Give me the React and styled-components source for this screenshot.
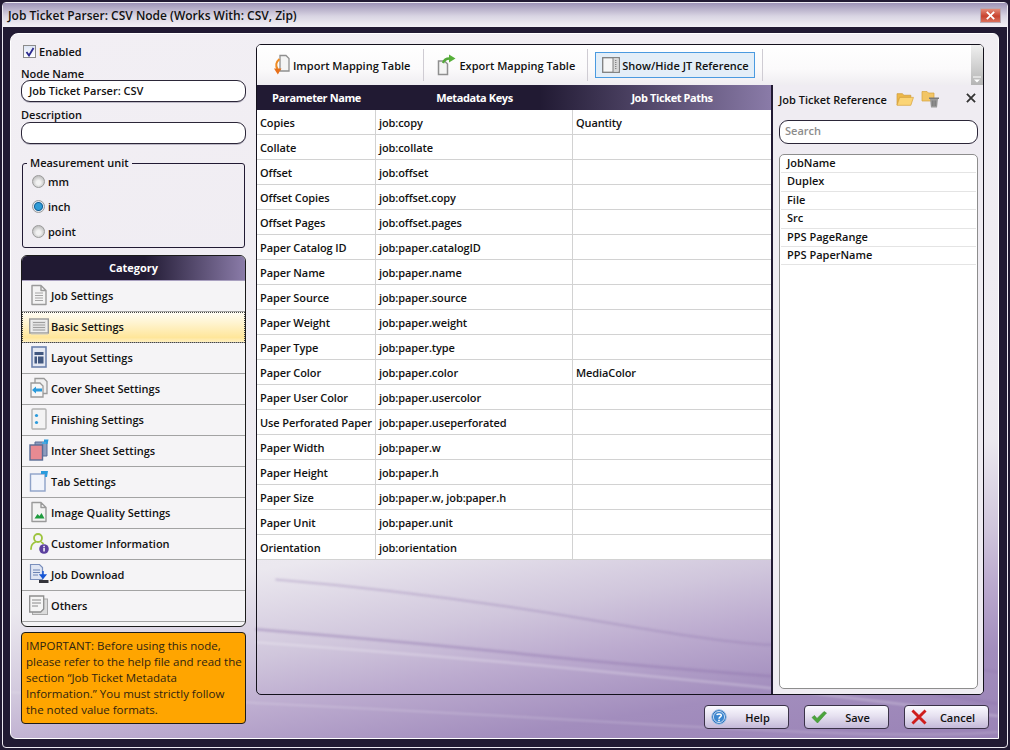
import React from "react";
import styled, { createGlobalStyle } from "styled-components";

const dark = "#211a33";

const Global = createGlobalStyle`
  html, body { margin: 0; padding: 0; background: ${dark}; }
  * { box-sizing: border-box; }
  body {
    font-family: "Open Sans", "Liberation Sans", sans-serif;
    font-size: 11px;
    font-weight: 600;
    color: #111;
  }
`;

const Shell = styled.div`
  width: 1010px;
  height: 750px;
  padding: 2px;
  background: ${dark};
  overflow: hidden;
`;
const Win = styled.div`
  height: 100%;
  display: flex;
  flex-direction: column;
  border: 1px solid #ece9f1;
  border-radius: 4px;
`;
const TitleBar = styled.div`
  height: 24px;
  flex: none;
  display: flex;
  align-items: center;
  justify-content: space-between;
  padding: 0 6px 0 5px;
  background: linear-gradient(#9d93b6, #d9d5e3 55%, #f3f1f6);
  font-size: 12px;
`;
const CloseBtn = styled.div`
  width: 21px;
  height: 15px;
  display: flex;
  align-items: center;
  justify-content: center;
  background: linear-gradient(#e58a77, #c8432f 55%, #d8705c);
  border: 1px solid #b9a7b0;
`;
const Frame = styled.div`
  flex: 1;
  min-height: 0;
  padding: 6px 8px 8px 7px;
  display: flex;
`;
const Panel = styled.div`
  position: relative;
  flex: 1;
  display: flex;
  gap: 10px;
  padding: 10px 9px 9px 10px;
  border: 1px solid #fff;
  border-radius: 8px 6px 0 6px;
  overflow: hidden;
  background: linear-gradient(170deg, #f2eff4 0%, #eeebf1 60%, #ebe8ef 66%, #d0c6dc 76%, #bcabcf 82%, #a28dbd 90%, #9a83b6 100%);
`;
const Streaks = styled.svg`
  position: absolute;
  inset: 0;
  width: 100%;
  height: 100%;
  filter: blur(1.2px);
`;
const Left = styled.div`
  position: relative;
  width: 225px;
  flex: none;
  display: flex;
  flex-direction: column;
  & > * { flex: none; }
`;
const Right = styled.div`
  position: relative;
  width: 733px;
  flex: none;
  display: flex;
  flex-direction: column;
`;
const EnabledRow = styled.label`
  display: flex;
  align-items: center;
  gap: 3px;
  height: 13px;
  margin: 1px 0 9px 2px;
`;
const Check = styled.span`
  width: 13px;
  height: 13px;
  display: flex;
  align-items: center;
  justify-content: center;
  background: linear-gradient(#dfe6f5, #fff);
  border: 1px solid #8b8b8b;
`;
const FieldLabel = styled.div`
  height: ${(p) => p.$height || 14}px;
  line-height: 14px;
`;
const TextBox = styled.div`
  height: 22px;
  line-height: 20px;
  padding: 0 7px;
  margin-bottom: ${(p) => p.$after || 0}px;
  background: #fff;
  border: 1px solid #2b2638;
  border-radius: 9px;
  box-shadow: 0 1px 0 #bdb9c6;
`;
const UnitBox = styled.fieldset`
  height: 92px;
  margin: 0 1px;
  padding: 0 0 0 9px;
  border: 1px solid ${dark};
  border-radius: 3px;
  display: flex;
  flex-direction: column;
`;
const UnitLegend = styled.legend`
  padding: 0 3px;
  margin-left: -5px;
  margin-bottom: -1px;
  line-height: 14px;
`;
const RadioRow = styled.div`
  height: 25px;
  display: flex;
  align-items: center;
  gap: 3px;
`;
const RadioDot = styled.span`
  width: 13px;
  height: 13px;
  border-radius: 50%;
  border: 1px solid #9a9a9a;
  background: ${(p) =>
    p.$on
      ? "radial-gradient(circle, #2f9bd6 0 3px, #0f5f97 4px, #dfe6ee 5px)"
      : "radial-gradient(circle at 50% 60%, #f2f2f2 0 2px, #c4c4c4 6px)"};
`;
const Category = styled.div`
  height: 372px;
  margin-top: 7px;
  background: #f5f4f6;
  border: 1px solid #1b1b1b;
  border-radius: 6px;
  overflow: hidden;
`;
const GradientHead = styled.div`
  background: linear-gradient(90deg, ${dark} 0%, ${dark} 55%, #8a7ba8 100%);
  color: #fff;
  font-weight: 700;
  text-align: center;
`;
const CategoryHead = styled(GradientHead)`
  height: 25px;
  line-height: 24px;
  border-bottom: 1px solid #a9a0c0;
`;
const CategoryRow = styled.div`
  height: 31px;
  display: flex;
  align-items: center;
  gap: 2px;
  padding: 0 0 2px 7px;
  border-bottom: 1px solid #a3a3a3;
  ${(p) =>
    p.$active &&
    `background: linear-gradient(#fffdf5, #fff3cc 40%, #ffe69a 85%, #fff0c2);
     outline: 1px dotted #444;
     outline-offset: -1px;`}
`;
const Notice = styled.div`
  height: 92px;
  margin-top: 5px;
  padding: 5px 4px 0;
  background: #ffa500;
  border: 1px solid #1b1b1b;
  border-radius: 4px;
  font-size: 11.5px;
  font-weight: 400;
  line-height: 16px;
  color: #2f2410;
  white-space: nowrap;
`;
const Main = styled.div`
  width: 728px;
  height: 651px;
  flex: none;
  display: flex;
  flex-direction: column;
  border: 1px solid #14111c;
  border-radius: 5px;
  overflow: hidden;
`;
const Toolbar = styled.div`
  height: 40px;
  flex: none;
  display: flex;
  align-items: center;
  padding-left: 17px;
  background: linear-gradient(#fff, #fbfafb 60%, #efedf1);
`;
const ToolItem = styled.div`
  display: flex;
  align-items: center;
  gap: 3px;
  margin-right: ${(p) => p.$after ?? 13}px;
`;
const ToolActive = styled(ToolItem)`
  height: 26px;
  width: 160px;
  padding-left: 6px;
  gap: 2px;
  background: #e3eef8;
  border: 1px solid #4a9ae0;
`;
const ToolSep = styled.div`
  width: 1px;
  height: 32px;
  background: #cfccd3;
  margin-right: ${(p) => p.$after ?? 13}px;
`;
const Grip = styled.div`
  margin-left: auto;
  width: 12px;
  height: 100%;
  display: flex;
  align-items: flex-end;
  justify-content: center;
  padding-bottom: 2px;
  background: linear-gradient(#f0f0f0, #b5b5b5);
`;
const Content = styled.div`
  flex: 1;
  min-height: 0;
  display: flex;
`;
const TableArea = styled.div`
  width: 514px;
  flex: none;
`;
const TableHead = styled(GradientHead)`
  height: 25px;
  display: grid;
  grid-template-columns: 119px 197px 198px;
  line-height: 25px;
  letter-spacing: -0.4px;
`;
const TableRow = styled.div`
  height: 25px;
  display: grid;
  grid-template-columns: 119px 197px 198px;
  background: #fff;
  border-bottom: 1px solid #d2d2d2;
`;
const Cell = styled.div`
  padding-left: 3px;
  line-height: 25px;
  letter-spacing: -0.1px;
  white-space: nowrap;
  border-right: 1px solid #d2d2d2;
  &:last-child { border-right: none; }
`;
const RefPane = styled.div`
  flex: 1;
  display: flex;
  flex-direction: column;
  padding: 0 5px 5px 6px;
  background: #efecf2;
  border-left: 2px solid ${dark};
`;
const RefHead = styled.div`
  height: 28px;
  flex: none;
  display: flex;
  align-items: center;
`;
const RefTitle = styled.span`
  margin-right: 9px;
`;
const RefGap = styled.span`
  width: 7px;
`;
const RefClose = styled.span`
  margin-left: auto;
  display: flex;
  margin-right: 2px;
  margin-top: -3px;
`;
const SearchBox = styled.div`
  height: 24px;
  flex: none;
  margin-top: 7px;
  padding: 0 5px;
  line-height: 20px;
  color: #8c8c8c;
  background: #fff;
  border: 1px solid #2b2638;
  border-radius: 9px;
`;
const RefList = styled.div`
  flex: 1;
  margin-top: 10px;
  padding: 0 1px;
  background: #fff;
  border: 1px solid #8d8d8d;
  border-radius: 5px;
`;
const RefRow = styled.div`
  height: 18.4px;
  line-height: 16px;
  padding-left: 6px;
  border-bottom: 1px solid #e4e4e4;
`;
const Footer = styled.div`
  display: flex;
  justify-content: flex-end;
  gap: 15px;
  margin-top: 10px;
`;
const FooterBtn = styled.div`
  width: 85px;
  height: 24px;
  display: flex;
  align-items: center;
  padding-left: 6px;
  background: linear-gradient(#fbfaff, #e6e1f0 45%, #c4b9d9);
  border: 1px solid #3a3248;
  border-radius: 4px;
`;
const BtnLabel = styled.span`
  flex: 1;
  text-align: center;
`;

const DocBase = () => (
  <path d="M3 1.500h9l5 5v14H3z M12 1.500v5h5" fill="#f3f3f3" stroke="#9a9a9a" strokeWidth="1.400" strokeLinejoin="round" />
);

const icons = {
  job: (
    <>
      <DocBase />
      <path d="M6 9h8M6 11.500h8M6 14h8M6 16.500h8" stroke="#a5a5a5" />
    </>
  ),
  basic: (
    <>
      <rect x="0.700" y="4" width="18.600" height="14" fill="#eeeeee" stroke="#9a9a9a" strokeWidth="1.400" />
      <path d="M2 19h17" stroke="#c9c9c9" />
      <rect x="3" y="6" width="14" height="10" fill="#e2e2e2" />
      <path d="M4 7.500h12M4 10h12M4 12.500h12M4 15h12" stroke="#9f9f9f" />
    </>
  ),
  layout: (
    <>
      <rect x="3" y="1" width="14" height="20" fill="#e4e8f2" stroke="#6d82ad" strokeWidth="1.600" />
      <path d="M5.500 6h9v3h-9z M9 10.500h5.500v7H9z M5.500 10.500h2.500v7h-2.500z" fill="#41577f" />
    </>
  ),
  cover: (
    <>
      <path d="M6 1.500h9l3 3v12H6z" fill="#f0f0f0" stroke="#9a9a9a" strokeWidth="1.300" />
      <path d="M2 6h9l3 3v11H2z" fill="#f7f7f7" stroke="#9a9a9a" strokeWidth="1.300" />
      <path d="M3 13l4-3.500v2h6v3H7v2z" fill="#2b9bdc" />
    </>
  ),
  finishing: (
    <>
      <rect x="3" y="1" width="14" height="20" rx="1" fill="#f3f3f3" stroke="#b3b3b3" strokeWidth="1.400" />
      <circle cx="7.500" cy="7.500" r="1.600" fill="#2b9bdc" />
      <circle cx="7.500" cy="14.500" r="1.600" fill="#2b9bdc" />
    </>
  ),
  inter: (
    <>
      <path d="M6 3h12v14H6z" fill="#8d9cbd" stroke="#5a6d96" />
      <path d="M15 0.500h4.500l-1 4.500H15z" fill="#2b9bdc" />
      <rect x="1" y="6" width="12.500" height="15" fill="#e78a92" stroke="#5a6d96" strokeWidth="1.400" />
      <path d="M13 3h4v2h-4z" fill="#4aa7de" />
    </>
  ),
  tab: (
    <>
      <rect x="1.500" y="4" width="14.500" height="17" fill="#f1f4fb" stroke="#8ea2c8" strokeWidth="1.400" />
      <path d="M12 1h7l-1 6h-2V4h-4z" fill="#2b9bdc" />
    </>
  ),
  image: (
    <>
      <DocBase />
      <path d="M5.500 17.500l3-4.500 2 2 2-3 3 5.500z" fill="#1f9c3f" />
    </>
  ),
  customer: (
    <>
      <circle cx="9" cy="6" r="4" fill="none" stroke="#9ec43f" strokeWidth="1.800" />
      <path d="M2 17c0-4 2-6 4.500-7" fill="none" stroke="#9ec43f" strokeWidth="1.800" strokeLinecap="round" />
      <path d="M12 10c1 .5 2 1 2.500 2" fill="none" stroke="#9ec43f" strokeWidth="1.800" />
      <circle cx="15" cy="17" r="4.800" fill="#5b3f9e" />
      <rect x="14.300" y="15.800" width="1.500" height="3.700" fill="#fff" />
      <rect x="14.300" y="13.800" width="1.500" height="1.300" fill="#fff" />
    </>
  ),
  download: (
    <>
      <path d="M1.500 1.500h9l3 3v12h-12z" fill="#dfe5f3" stroke="#7a8fbc" strokeWidth="1.200" />
      <path d="M4 7h7M4 9.500h7M4 12h5" stroke="#6c83b3" />
      <path d="M14 8v6M11.500 12l2.500 3 2.500-3z" stroke="#1556d6" strokeWidth="1.500" fill="#1556d6" />
      <rect x="10" y="17" width="9.500" height="3" fill="#33333a" />
    </>
  ),
  others: (
    <>
      <rect x="3.500" y="5" width="15" height="15.500" fill="#dcdcdc" stroke="#a8a8a8" />
      <path d="M0.700 2h14v13l-3 3h-11z" fill="#f5f5f5" stroke="#8e8e8e" strokeWidth="1.300" />
      <path d="M3 6h9M3 9h9M3 12h6" stroke="#8a8a8a" />
    </>
  ),
};

const CategoryIcon = ({ name }) => (
  <svg width="20" height="22" viewBox="0 0 20 22">
    {icons[name]}
  </svg>
);

const ImportIcon = () => (
  <svg width="16" height="22" viewBox="0 0 16 22">
    <path d="M6 1.500h6l3 3V17H6z" fill="#f4f4f4" stroke="#8f8f8f" strokeWidth="1.300" />
    <path d="M5.500 5C2 8 1.500 12 3.500 15" fill="none" stroke="#ee8b24" strokeWidth="2.200" />
    <path d="M0 14.500h7.500L3.800 20.500z" fill="#e8701a" />
  </svg>
);
const ExportIcon = () => (
  <svg width="19" height="22" viewBox="0 0 19 22">
    <path d="M1.500 7h6l3 3v10.500h-9z" fill="#f4f4f4" stroke="#8f8f8f" strokeWidth="1.500" />
    <path d="M6 9C7 6 9 4.500 12.500 4.500" fill="none" stroke="#55a83b" strokeWidth="2.400" />
    <path d="M12 0.500L18.500 4.500 12 8.500z" fill="#57b03a" />
  </svg>
);
const ToggleIcon = () => (
  <svg width="18" height="18" viewBox="0 0 18 18">
    <rect x="0.700" y="1.700" width="16.600" height="14.600" fill="#f6f6f6" stroke="#7e7e7e" strokeWidth="1.300" />
    <rect x="11" y="2.500" width="5.500" height="13" fill="#d8d8d8" />
    <path d="M11 2v14" stroke="#7e7e7e" />
    <path d="M13.800 4v10" stroke="#666" strokeDasharray="1 1" />
  </svg>
);
const FolderIcon = () => (
  <svg width="18" height="15" viewBox="0 0 17 14">
    <path d="M1 3V1.500h5L7.500 3H14v2H3.500L1 12z" fill="#eeb94a" stroke="#cf9a35" strokeWidth=".7" />
    <path d="M3.500 5H16.500L14 12.500H1z" fill="#fbd475" stroke="#d9a540" strokeWidth=".7" />
  </svg>
);
const FolderTrashIcon = () => (
  <svg width="19" height="19" viewBox="0 0 19 19">
    <path d="M1 1.500h5L7.500 3H13v8H1z" fill="#f2c566" stroke="#d7a33d" strokeWidth=".7" />
    <path d="M8 7.500h10v1.500H8z" fill="#7a7a7a" />
    <path d="M9 9h8l-1 8.500h-6z" fill="#9a9a9a" />
    <path d="M11.300 10.500v5.500M13 10.500v5.500M14.700 10.500v5.500" stroke="#6d6d6d" strokeWidth=".7" />
  </svg>
);
const CrossIcon = ({ size = 11, color = "#333", width = 2 }) => (
  <svg width={size} height={size} viewBox="0 0 11 11">
    <path d="M1 1l9 9M10 1l-9 9" stroke={color} strokeWidth={width} />
  </svg>
);
const HelpIcon = () => (
  <svg width="16" height="16" viewBox="0 0 16 16">
    <circle cx="8" cy="8" r="7.300" fill="#2a6fbd" stroke="#9fc0e4" strokeWidth="1" />
    <circle cx="8" cy="8" r="5.600" fill="#3c86d0" stroke="#e8f1fa" strokeWidth=".8" />
    <path d="M5.800 6.200C6 4.600 10.200 4.400 10.300 6.500 10.300 8 8 8 8 9.800" fill="none" stroke="#fff" strokeWidth="1.500" />
    <rect x="7.200" y="10.700" width="1.600" height="1.600" fill="#fff" />
  </svg>
);
const SaveIcon = () => (
  <svg width="16" height="14" viewBox="0 0 16 14">
    <path d="M1 7.500L3.500 5.500 6 8.500 13 1.500 15.500 3 6.500 13z" fill="#4ba53c" stroke="#3c8a30" strokeWidth=".6" />
  </svg>
);
const CancelIcon = () => (
  <svg width="16" height="16" viewBox="0 0 11 11">
    <path d="M1 1l9 9M10 1l-9 9" stroke="#cf1d1d" strokeWidth="2" />
  </svg>
);
const Grabber = () => (
  <svg width="8" height="7" viewBox="0 0 8 7">
    <path d="M0 1h8" stroke="#fff" />
    <path d="M1 3.500h6L4 6.500z" fill="#fff" />
  </svg>
);
const CheckMark = () => (
  <svg width="10" height="10" viewBox="0 0 10 10">
    <path d="M1.500 5L4 8.500 8.500 1" fill="none" stroke="#2c2a8f" strokeWidth="1.800" />
  </svg>
);

const categories = [
  ["job", "Job Settings"],
  ["basic", "Basic Settings"],
  ["layout", "Layout Settings"],
  ["cover", "Cover Sheet Settings"],
  ["finishing", "Finishing Settings"],
  ["inter", "Inter Sheet Settings"],
  ["tab", "Tab Settings"],
  ["image", "Image Quality Settings"],
  ["customer", "Customer Information"],
  ["download", "Job Download"],
  ["others", "Others"],
];

const rows = [
  ["Copies", "job:copy", "Quantity"],
  ["Collate", "job:collate", ""],
  ["Offset", "job:offset", ""],
  ["Offset Copies", "job:offset.copy", ""],
  ["Offset Pages", "job:offset.pages", ""],
  ["Paper Catalog ID", "job:paper.catalogID", ""],
  ["Paper Name", "job:paper.name", ""],
  ["Paper Source", "job:paper.source", ""],
  ["Paper Weight", "job:paper.weight", ""],
  ["Paper Type", "job:paper.type", ""],
  ["Paper Color", "job:paper.color", "MediaColor"],
  ["Paper User Color", "job:paper.usercolor", ""],
  ["Use Perforated Paper", "job:paper.useperforated", ""],
  ["Paper Width", "job:paper.w", ""],
  ["Paper Height", "job:paper.h", ""],
  ["Paper Size", "job:paper.w, job:paper.h", ""],
  ["Paper Unit", "job:paper.unit", ""],
  ["Orientation", "job:orientation", ""],
];

const refItems = ["JobName", "Duplex", "File", "Src", "PPS PageRange", "PPS PaperName"];

export default function App() {
  return (
    <Shell>
      <Global />
      <Win>
        <TitleBar>
          <span>Job Ticket Parser: CSV Node (Works With: CSV, Zip)</span>
          <CloseBtn>
            <CrossIcon size={9} color="#fff" width={2.2} />
          </CloseBtn>
        </TitleBar>
        <Frame>
          <Panel>
            <Streaks viewBox="0 0 989 706" preserveAspectRatio="none">
              <g fill="none" stroke="#8d74ad">
                <path d="M265 547Q420 560 583 588T770 612T989 640" strokeWidth="2" opacity=".35" />
                <path d="M245 597Q400 610 515 622T762 644T989 672" strokeWidth="2.500" opacity=".45" />
                <path d="M245 610Q450 625 600 640T762 656T989 684" stroke="#fff" strokeWidth="2.500" opacity=".25" />
                <path d="M0 660Q300 672 600 690T989 700" stroke="#fff" strokeWidth="2" opacity=".18" />
              </g>
            </Streaks>
            <Left>
              <EnabledRow>
                <Check>
                  <CheckMark />
                </Check>
                Enabled
              </EnabledRow>
              <FieldLabel $height={13}>Node Name</FieldLabel>
              <TextBox $after={6}>Job Ticket Parser: CSV</TextBox>
              <FieldLabel>Description</FieldLabel>
              <TextBox $after={12} />
              <UnitBox>
                <UnitLegend>Measurement unit</UnitLegend>
                <RadioRow>
                  <RadioDot />
                  mm
                </RadioRow>
                <RadioRow>
                  <RadioDot $on />
                  inch
                </RadioRow>
                <RadioRow>
                  <RadioDot />
                  point
                </RadioRow>
              </UnitBox>
              <Category>
                <CategoryHead>Category</CategoryHead>
                {categories.map(([icon, label]) => (
                  <CategoryRow key={icon} $active={icon === "basic"}>
                    <CategoryIcon name={icon} />
                    {label}
                  </CategoryRow>
                ))}
              </Category>
              <Notice>
                IMPORTANT: Before using this node,
                <br />
                please refer to the help file and read the
                <br />
                section “Job Ticket Metadata
                <br />
                Information.” You must strictly follow
                <br />
                the noted value formats.
              </Notice>
            </Left>
            <Right>
              <Main>
                <Toolbar>
                  <ToolItem>
                    <ImportIcon />
                    Import Mapping Table
                  </ToolItem>
                  <ToolSep />
                  <ToolItem $after={12}>
                    <ExportIcon />
                    Export Mapping Table
                  </ToolItem>
                  <ToolSep $after={7} />
                  <ToolActive $after={7}>
                    <ToggleIcon />
                    Show/Hide JT Reference
                  </ToolActive>
                  <ToolSep />
                  <Grip>
                    <Grabber />
                  </Grip>
                </Toolbar>
                <Content>
                  <TableArea>
                    <TableHead>
                      <span>Parameter Name</span>
                      <span>Metadata Keys</span>
                      <span>Job Ticket Paths</span>
                    </TableHead>
                    {rows.map(([name, key, path]) => (
                      <TableRow key={name}>
                        <Cell>{name}</Cell>
                        <Cell>{key}</Cell>
                        <Cell>{path}</Cell>
                      </TableRow>
                    ))}
                  </TableArea>
                  <RefPane>
                    <RefHead>
                      <RefTitle>Job Ticket Reference</RefTitle>
                      <FolderIcon />
                      <RefGap />
                      <FolderTrashIcon />
                      <RefClose>
                        <CrossIcon size={10} />
                      </RefClose>
                    </RefHead>
                    <SearchBox>Search</SearchBox>
                    <RefList>
                      {refItems.map((item) => (
                        <RefRow key={item}>{item}</RefRow>
                      ))}
                    </RefList>
                  </RefPane>
                </Content>
              </Main>
              <Footer>
                <FooterBtn>
                  <HelpIcon />
                  <BtnLabel>Help</BtnLabel>
                </FooterBtn>
                <FooterBtn>
                  <SaveIcon />
                  <BtnLabel>Save</BtnLabel>
                </FooterBtn>
                <FooterBtn>
                  <CancelIcon />
                  <BtnLabel>Cancel</BtnLabel>
                </FooterBtn>
              </Footer>
            </Right>
          </Panel>
        </Frame>
      </Win>
    </Shell>
  );
}
